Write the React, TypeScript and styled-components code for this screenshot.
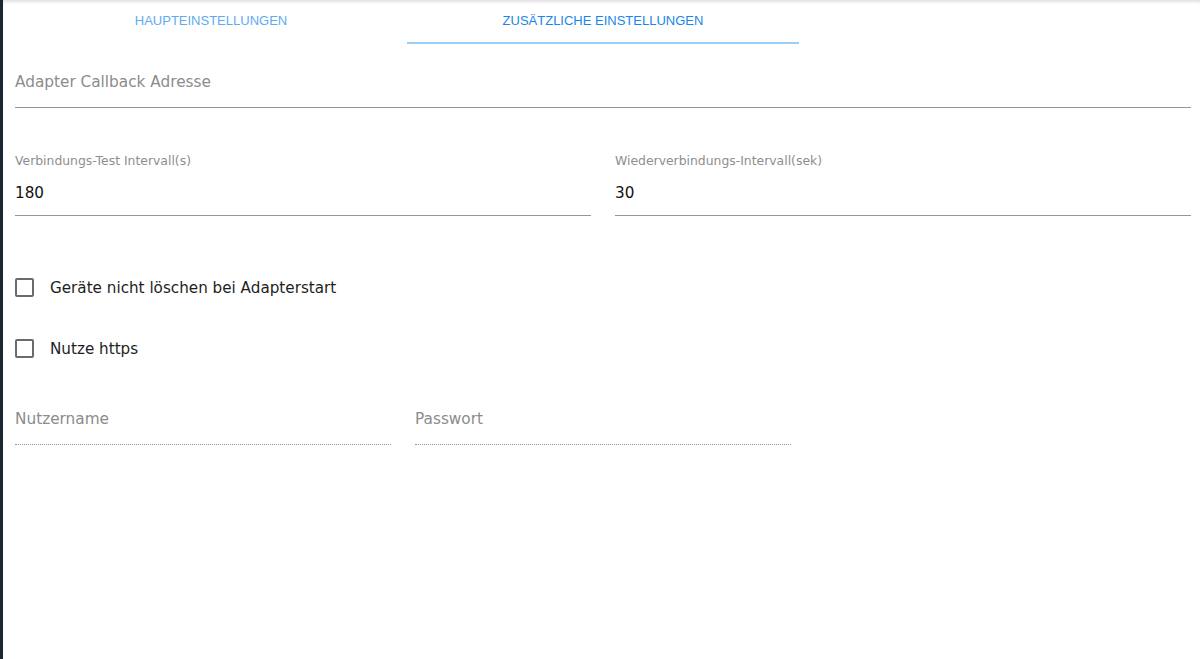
import { createGlobalStyle } from "styled-components";
import styled from "styled-components";

const GlobalStyle = createGlobalStyle`
  html, body {
    margin: 0;
    padding: 0;
    background: #ffffff;
    font-family: "DejaVu Sans", "Liberation Sans", sans-serif;
  }
`;

const Frame = styled.div`
  display: flex;
  height: 659px;
  overflow: hidden;
`;

const SideEdge = styled.div`
  width: 3px;
  flex-shrink: 0;
  background: #1b2631;
`;

const Content = styled.div`
  flex: 1;
  padding: 0 9px 0 12px;
  box-shadow: inset 0 4px 4px -3px rgba(0, 0, 0, 0.18);
`;

const TabBar = styled.div`
  display: flex;
  height: 44px;
`;

const Tab = styled.div<{ $active?: boolean }>`
  width: 392px;
  display: flex;
  align-items: center;
  justify-content: center;
  box-sizing: border-box;
  padding-bottom: 2px;
  font-family: "Liberation Sans", Arial, sans-serif;
  font-size: 13px;
  text-transform: uppercase;
  color: ${(p) => (p.$active ? "#1a86e8" : "#5eabf2")};
  border-bottom: 2px solid ${(p) => (p.$active ? "#9bcdf7" : "transparent")};
`;

const Row = styled.div<{ $cols: number; $top: number }>`
  display: grid;
  grid-template-columns: repeat(${(p) => p.$cols}, 1fr);
  column-gap: 24px;
  margin-top: ${(p) => p.$top}px;
`;

const Field = styled.div<{ $disabled?: boolean; $bottom: number }>`
  padding-bottom: ${(p) => p.$bottom}px;
  border-bottom: 1px ${(p) => (p.$disabled ? "dotted" : "solid")} #969696;
`;

const Placeholder = styled.div`
  font-size: 15.3px;
  line-height: 20px;
  color: #8c8c8c;
`;

const Label = styled.div`
  font-size: 12.4px;
  line-height: 14px;
  color: #8e8e8e;
`;

const Value = styled.div`
  margin-top: 15px;
  font-size: 15.2px;
  line-height: 20px;
  color: #111;
`;

const CheckRow = styled.label<{ $top: number }>`
  display: flex;
  align-items: center;
  height: 24px;
  margin-top: ${(p) => p.$top}px;
  font-size: 15.2px;
  color: #1e1e1e;
`;

const Box = styled.span`
  width: 19px;
  height: 19px;
  box-sizing: border-box;
  border: 2px solid #6b6b6b;
  border-radius: 2px;
  margin-right: 16px;
  margin-top: -2px;
`;

const SettingsPanel = () => (
  <Content>
    <TabBar>
      <Tab>Haupteinstellungen</Tab>
      <Tab $active>Zusätzliche Einstellungen</Tab>
    </TabBar>

    <Row $cols={1} $top={28}>
      <Field $bottom={15}>
        <Placeholder>Adapter Callback Adresse</Placeholder>
      </Field>
    </Row>

    <Row $cols={2} $top={46}>
      <Field $bottom={12}>
        <Label>Verbindungs-Test Intervall(s)</Label>
        <Value>180</Value>
      </Field>
      <Field $bottom={12}>
        <Label>Wiederverbindungs-Intervall(sek)</Label>
        <Value>30</Value>
      </Field>
    </Row>

    <CheckRow $top={60}>
      <Box />
      Geräte nicht löschen bei Adapterstart
    </CheckRow>
    <CheckRow $top={37}>
      <Box />
      Nutze https
    </CheckRow>

    <Row $cols={3} $top={48}>
      <Field $disabled $bottom={15}>
        <Placeholder>Nutzername</Placeholder>
      </Field>
      <Field $disabled $bottom={15}>
        <Placeholder>Passwort</Placeholder>
      </Field>
    </Row>
  </Content>
);

export default function App() {
  return (
    <>
      <GlobalStyle />
      <Frame>
        <SideEdge />
        <SettingsPanel />
      </Frame>
    </>
  );
}
